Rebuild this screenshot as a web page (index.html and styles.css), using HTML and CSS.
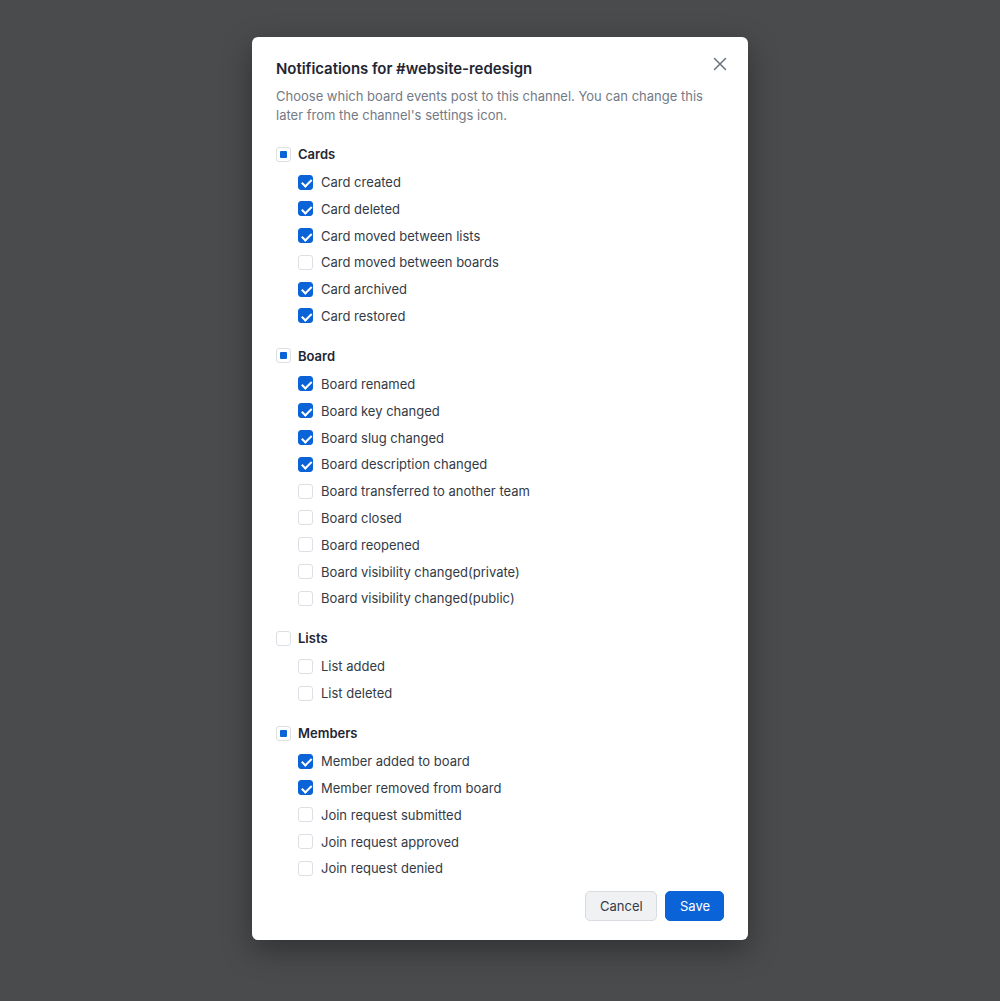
FILE: index.html
```html
<!DOCTYPE html>
<html lang="en">
<head>
<meta charset="utf-8">
<title>Notifications</title>
<link rel="stylesheet" href="styles.css">
</head>
<body>
<div class="modal">
  <div class="head">
    <h2 class="title">Notifications for #website-redesign</h2>
    <button class="close" aria-label="Close">
      <svg width="14" height="14" viewBox="0 0 14 14"><path d="M1.5 1.5l11 11M12.5 1.5l-11 11" stroke="#6b7280" stroke-width="1.5" stroke-linecap="round" fill="none"/></svg>
    </button>
  </div>
  <p class="desc">Choose which board events post to this channel. You can change this later from the channel's settings icon.</p>

  <div class="groups">
    <div class="group">
      <div class="row header"><span class="box partial"></span><span class="hlabel">Cards</span></div>
      <div class="items">
        <div class="row"><span class="box on"></span><span>Card created</span></div>
        <div class="row"><span class="box on"></span><span>Card deleted</span></div>
        <div class="row"><span class="box on"></span><span>Card moved between lists</span></div>
        <div class="row"><span class="box"></span><span>Card moved between boards</span></div>
        <div class="row"><span class="box on"></span><span>Card archived</span></div>
        <div class="row"><span class="box on"></span><span>Card restored</span></div>
      </div>
    </div>

    <div class="group">
      <div class="row header"><span class="box partial"></span><span class="hlabel">Board</span></div>
      <div class="items">
        <div class="row"><span class="box on"></span><span>Board renamed</span></div>
        <div class="row"><span class="box on"></span><span>Board key changed</span></div>
        <div class="row"><span class="box on"></span><span>Board slug changed</span></div>
        <div class="row"><span class="box on"></span><span>Board description changed</span></div>
        <div class="row"><span class="box"></span><span>Board transferred to another team</span></div>
        <div class="row"><span class="box"></span><span>Board closed</span></div>
        <div class="row"><span class="box"></span><span>Board reopened</span></div>
        <div class="row"><span class="box"></span><span>Board visibility changed(private)</span></div>
        <div class="row"><span class="box"></span><span>Board visibility changed(public)</span></div>
      </div>
    </div>

    <div class="group">
      <div class="row header"><span class="box"></span><span class="hlabel">Lists</span></div>
      <div class="items">
        <div class="row"><span class="box"></span><span>List added</span></div>
        <div class="row"><span class="box"></span><span>List deleted</span></div>
      </div>
    </div>

    <div class="group">
      <div class="row header"><span class="box partial"></span><span class="hlabel">Members</span></div>
      <div class="items">
        <div class="row"><span class="box on"></span><span>Member added to board</span></div>
        <div class="row"><span class="box on"></span><span>Member removed from board</span></div>
        <div class="row"><span class="box"></span><span>Join request submitted</span></div>
        <div class="row"><span class="box"></span><span>Join request approved</span></div>
        <div class="row"><span class="box"></span><span>Join request denied</span></div>
      </div>
    </div>
  </div>

  <div class="actions">
    <button class="btn cancel">Cancel</button>
    <button class="btn save">Save</button>
  </div>
</div>
</body>
</html>
```

FILE: styles.css
```css
* { box-sizing: border-box; }
html, body { margin: 0; padding: 0; }
body {
  background: #4a4b4d;
  font-family: Inter, "Noto Sans", "Liberation Sans", sans-serif;
  color: #2f3540;
  min-height: 1001px;
  padding-top: 37px;
}
.modal {
  width: 496px;
  margin: 0 auto;
  background: #ffffff;
  border-radius: 6px;
  padding: 20px 24px 19px 24px;
  box-shadow: 0 10px 30px rgba(0, 0, 0, 0.35);
}
.head {
  display: flex;
  justify-content: space-between;
  align-items: center;
  height: 24px;
}
.title {
  margin: 0;
  font-size: 15px;
  font-weight: 600;
  line-height: 24px;
  color: #1f2633;
  letter-spacing: -0.05px;
}
.close {
  border: 0;
  background: none;
  padding: 0;
  width: 14px;
  height: 14px;
  margin-right: -3px;
  margin-top: -10px;
  display: flex;
  cursor: pointer;
}
.desc {
  margin: 6px 0 0 0;
  font-size: 13px;
  line-height: 19px;
  color: #737a86;
}
.groups {
  margin-top: 19px;
  display: flex;
  flex-direction: column;
  gap: 20px;
}
.group { display: flex; flex-direction: column; }
.items {
  display: flex;
  flex-direction: column;
  gap: 6.8px;
  margin-top: 8px;
  padding-left: 22px;
}
.row {
  display: flex;
  align-items: center;
  height: 20px;
  font-size: 13px;
  color: #333a46;
  gap: 8px;
}
.header { gap: 7px; }
.hlabel {
  font-weight: 600;
  color: #1f2633;
}
.box {
  width: 15px;
  height: 15px;
  border: 1px solid #dcdfe4;
  border-radius: 3px;
  background: #fff;
  flex: none;
  position: relative;
}
.box.on {
  background: #0b63d8;
  border-color: #0b63d8;
}
.box.on::after {
  content: "";
  position: absolute;
  left: 4.5px;
  top: 1.5px;
  width: 3.5px;
  height: 7.5px;
  border: solid #fff;
  border-width: 0 2px 2px 0;
  transform: rotate(45deg);
}
.box.partial::after {
  content: "";
  position: absolute;
  left: 3px;
  top: 3px;
  width: 7px;
  height: 7px;
  background: #0b63d8;
  border-radius: 1px;
}
.actions {
  margin-top: 12.5px;
  display: flex;
  justify-content: flex-end;
  gap: 8px;
}
.btn {
  height: 30px;
  border-radius: 5px;
  font-family: inherit;
  font-size: 13px;
  padding: 0 14px;
  cursor: pointer;
}
.cancel {
  background: #f0f1f3;
  border: 1px solid #d8dbe0;
  color: #353b47;
  width: 72px;
}
.save {
  background: #0b63d8;
  border: 1px solid #0b63d8;
  color: #ffffff;
  width: 59px;
}
```
